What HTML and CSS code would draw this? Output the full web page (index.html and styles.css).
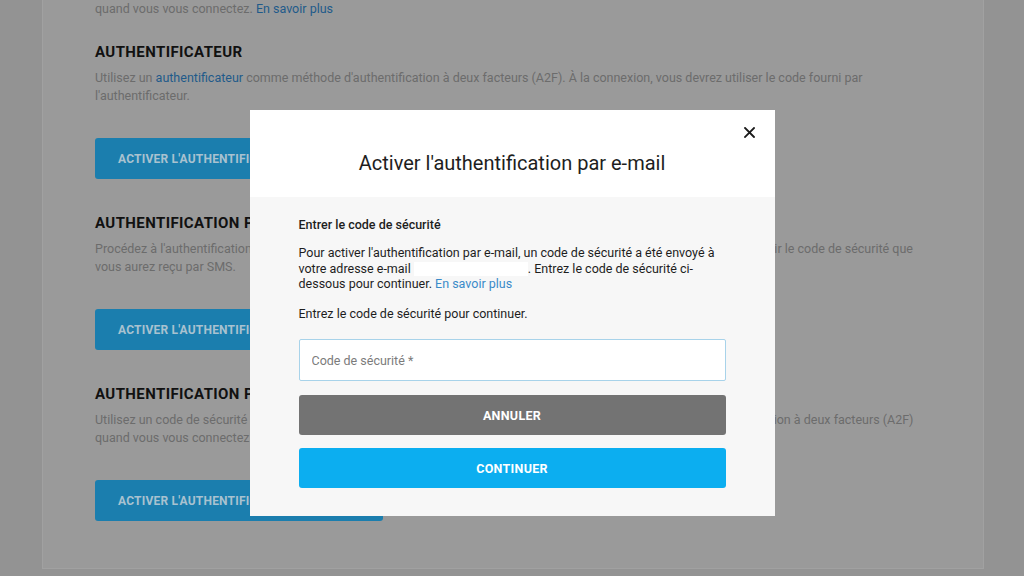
FILE: index.html
```html
<!DOCTYPE html>
<html lang="fr">
<head>
<meta charset="utf-8">
<title>Authentification</title>
<link rel="stylesheet" href="styles.css">
</head>
<body>
<div class="page">
  <main class="card">
    <p class="desc desc-top">quand vous vous connectez. <a class="link" href="#">En savoir plus</a></p>

    <section class="method">
      <h2 class="method-title">AUTHENTIFICATEUR</h2>
      <p class="desc">Utilisez un <a class="link" href="#">authentificateur</a> comme méthode d'authentification à deux facteurs (A2F). À la connexion, vous devrez utiliser le code fourni par<br>l'authentificateur.</p>
      <button class="activate">ACTIVER L'AUTHENTIFICATEUR</button>
    </section>

    <section class="method">
      <h2 class="method-title">AUTHENTIFICATION PAR SMS</h2>
      <p class="desc">Procédez à l'authentification à deux facteurs (A2F) par SMS lorsque vous vous connectez. À la connexion, vous devrez saisir le code de sécurité que<br>vous aurez reçu par SMS.</p>
      <button class="activate">ACTIVER L'AUTHENTIFICATION PAR SMS</button>
    </section>

    <section class="method">
      <h2 class="method-title">AUTHENTIFICATION PAR E-MAIL</h2>
      <p class="desc">Utilisez un code de sécurité qui est envoyé à votre adresse e-mail associée à votre compte comme méthode d'authentification à deux facteurs (A2F)<br>quand vous vous connectez. <a class="link" href="#">En savoir plus</a></p>
      <button class="activate">ACTIVER L'AUTHENTIFICATION PAR E-MAIL</button>
    </section>
  </main>
</div>

<div class="overlay">
  <div class="modal" role="dialog" aria-labelledby="modal-title">
    <header class="modal-head">
      <h1 class="modal-title" id="modal-title">Activer l'authentification par e-mail</h1>
      <button class="close" aria-label="Fermer">
        <svg width="11" height="11" viewBox="0 0 11 11"><path d="M1 1 L10 10 M10 1 L1 10" stroke="#1a1a1a" stroke-width="1.8" stroke-linecap="square"/></svg>
      </button>
    </header>
    <div class="modal-body">
      <h3 class="step-title">Entrer le code de sécurité</h3>
      <p class="step-text">Pour activer l'authentification par e-mail, un code de sécurité a été envoyé à votre adresse e-mail <span class="redacted"></span>. Entrez le code de sécurité ci-dessous pour continuer. <a class="modal-link" href="#">En savoir plus</a></p>
      <p class="step-text step-hint">Entrez le code de sécurité pour continuer.</p>
      <input class="code-input" type="text" placeholder="Code de sécurité *">
      <button class="btn btn-cancel">ANNULER</button>
      <button class="btn btn-continue">CONTINUER</button>
    </div>
  </div>
</div>
</body>
</html>
```

FILE: styles.css
```css
* { box-sizing: border-box; }

html, body {
  margin: 0;
  height: 100%;
}

body {
  background: #939393;
  font-family: Roboto, "Liberation Sans", Arial, sans-serif;
  overflow: hidden;
}

.page {
  padding: 0 40px 0 42px;
}

.card {
  width: 942px;
  background: #9a9a9a;
  border: 1px solid #a1a1a1;
  border-top: none;
  padding: 0 52px 47px 52px;
}

.desc {
  margin: 0;
  font-size: 12.5px;
  line-height: 17.5px;
  color: #6c6c6c;
  white-space: nowrap;
}

.desc-top {
  line-height: 17px;
}

.link {
  color: #1f5a8a;
  text-decoration: none;
}

.method {
  margin-top: 25px;
}

.method + .method {
  margin-top: 34px;
}

.method-title {
  margin: 0 0 7px;
  font-size: 15px;
  line-height: 20px;
  font-weight: 700;
  letter-spacing: 0.4px;
  color: #111;
}

.activate {
  display: block;
  width: 288px;
  height: 41px;
  margin-top: 34px;
  padding: 0 23px;
  border: none;
  border-radius: 3px;
  background: #1b7eae;
  color: #a9c2d0;
  font-family: inherit;
  font-size: 12px;
  font-weight: 700;
  letter-spacing: 0.2px;
  text-align: left;
  white-space: nowrap;
  overflow: hidden;
}

/* Modal */
.overlay {
  position: fixed;
  inset: 0;
  display: flex;
  justify-content: center;
  align-items: flex-start;
  padding-top: 110px;
}

.modal {
  width: 525px;
  background: #f7f7f7;
}

.modal-head {
  position: relative;
  height: 87px;
  background: #fff;
  padding-top: 41px;
}

.modal-title {
  margin: 0;
  text-align: center;
  font-size: 20px;
  line-height: 24px;
  font-weight: 400;
  color: #1e1e1e;
}

.close {
  position: absolute;
  top: 16px;
  right: 19px;
  width: 13px;
  height: 13px;
  padding: 1px;
  border: none;
  background: none;
  line-height: 0;
}

.modal-body {
  padding: 20px 49px 28px;
}

.step-title {
  margin: 0;
  font-size: 12.5px;
  line-height: 16px;
  font-weight: 500;
  color: #1e1e1e;
}

.step-text {
  margin: 12px 0 0;
  font-size: 12.5px;
  line-height: 15.5px;
  color: #1e1e1e;
}

.step-hint {
  margin-top: 14px;
}

.redacted {
  display: inline-block;
  width: 114px;
  height: 14px;
  background: #fff;
  vertical-align: -3px;
}

.modal-link {
  color: #3b8bc9;
  text-decoration: none;
}

.code-input {
  display: block;
  width: 100%;
  height: 42px;
  margin-top: 18px;
  padding: 0 12px;
  border: 1px solid #a8d3ea;
  border-radius: 2px;
  background: #fff;
  font-family: inherit;
  font-size: 12.5px;
  color: #1e1e1e;
  outline: none;
}

.code-input::placeholder {
  color: #7b7b7b;
}

.btn {
  display: block;
  width: 100%;
  height: 40px;
  border: none;
  border-radius: 3px;
  color: #fff;
  font-family: inherit;
  font-size: 12.5px;
  font-weight: 700;
  letter-spacing: 0.3px;
}

.btn-cancel {
  margin-top: 14px;
  background: #737373;
}

.btn-continue {
  margin-top: 13px;
  background: #0caef0;
}
```
